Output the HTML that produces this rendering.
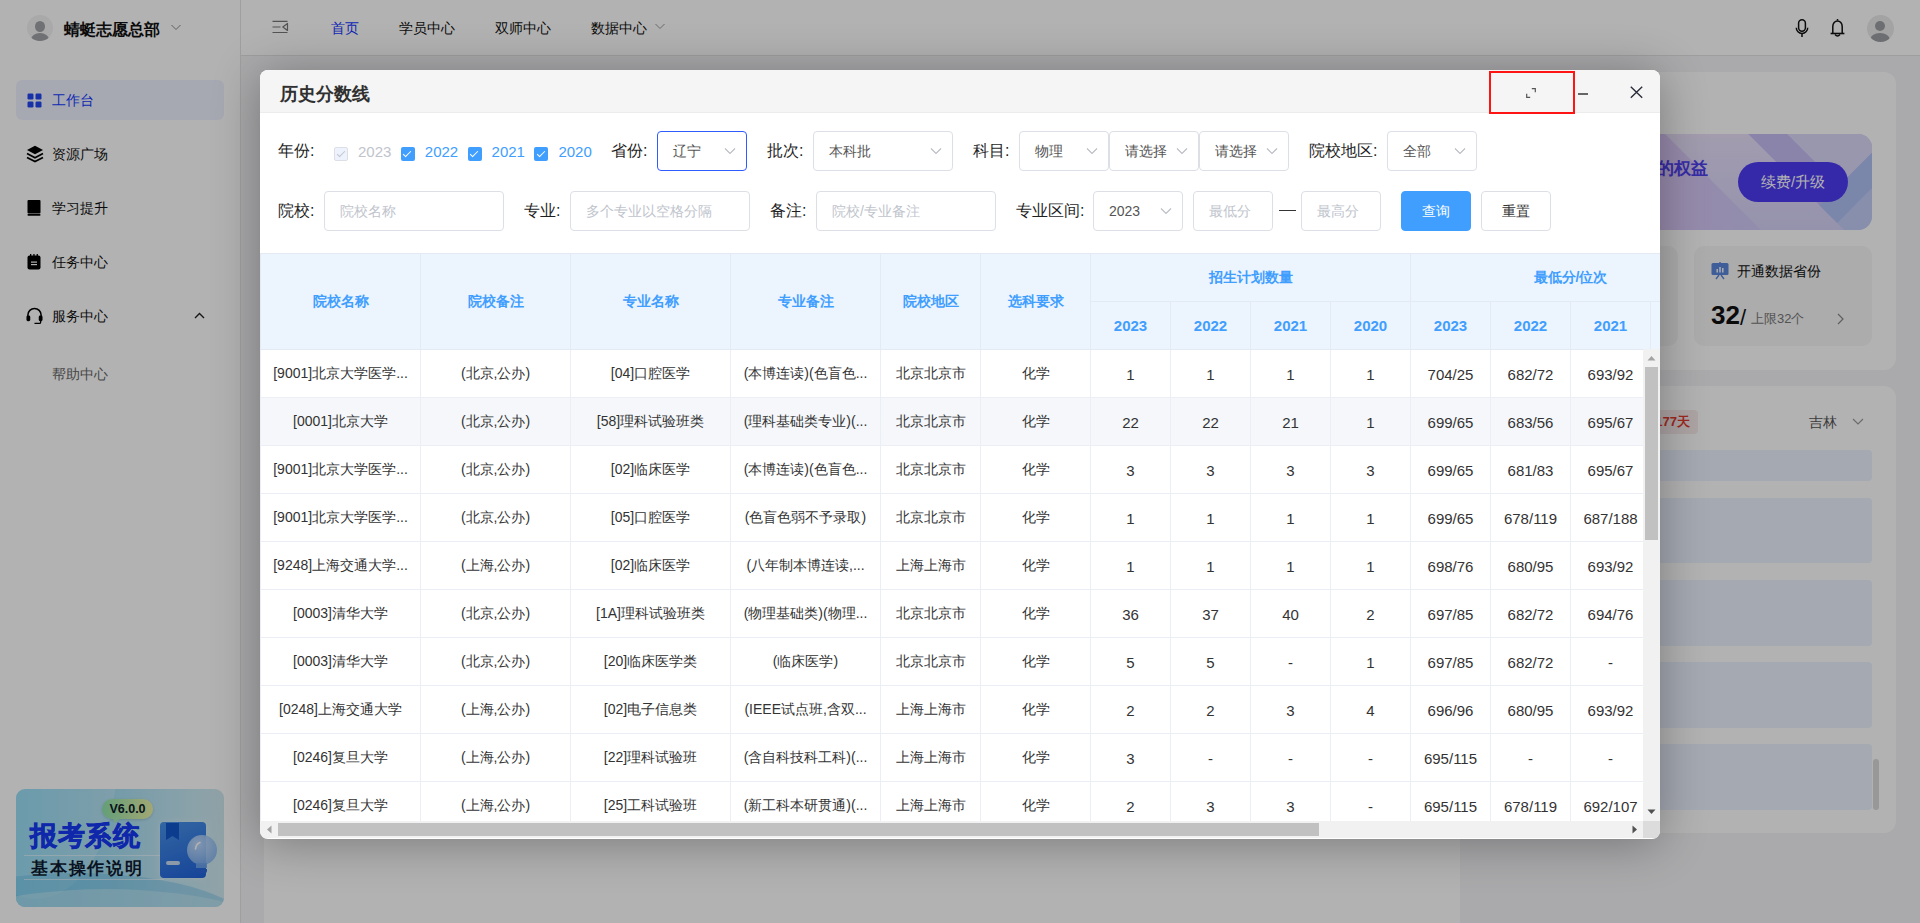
<!DOCTYPE html>
<html><head><meta charset="utf-8">
<style>
*{box-sizing:border-box;margin:0;padding:0}
html,body{width:1920px;height:923px;overflow:hidden;font-family:"Liberation Sans",sans-serif;background:#f4f4f6;position:relative}
.abs{position:absolute}
/* sidebar */
#side{position:absolute;left:0;top:0;width:241px;height:923px;background:#fff;border-right:1px solid #e4e4e4}
.mi{position:absolute;left:16px;width:208px;height:40px;font-size:14px;color:#111;line-height:40px;padding-left:36px}
.mi.act{background:#eef3ff;border-radius:6px;color:#1638ff}
.mi svg{position:absolute;left:10.5px;top:12.5px}
/* header */
#hdr{position:absolute;left:241px;top:0;width:1679px;height:56px;background:#fff;border-bottom:1px solid #e2e2e2}
.nav{position:absolute;top:0;height:56px;line-height:56px;font-size:14px;color:#111}
/* main cards */
.card{position:absolute;background:#fff;border-radius:8px}
/* overlay */
#ov{position:absolute;left:0;top:0;width:1920px;height:923px;background:rgba(0,0,0,.3)}
/* modal */
#modal{position:absolute;left:260px;top:70px;width:1400px;height:769px;background:#fff;border-radius:8px;overflow:hidden;box-shadow:0 4px 48px rgba(0,0,0,.32)}
#mh{position:absolute;left:0;top:0;width:1400px;height:43px;background:#f5f5f5;border-bottom:1px solid #ececec}
#mh .t{position:absolute;left:20px;top:12.5px;line-height:22px;font-size:18px;font-weight:bold;color:#303030}
.lbl{position:absolute;font-size:16px;color:#1f1f1f;line-height:20px;white-space:nowrap}
.sel{position:absolute;height:40px;border:1px solid #dcdfe6;border-radius:4px;background:#fff;font-size:14px;color:#555;line-height:38px;padding-left:15px;white-space:nowrap}
.sel.act{border-color:#2f5bff}
.st.ph{color:#c0c4cc}
.cb{position:absolute;width:14px;height:14px;border-radius:2px;background:#409eff}
.cb:after{content:"";box-sizing:content-box;position:absolute;left:4.5px;top:2.2px;width:3px;height:7px;border-right:1.6px solid #fff;border-bottom:1.6px solid #fff;transform:rotate(45deg)}
.cb.dis{background:#edf2fc;border:1px solid #dcdfe6}
.cb.dis:after{border-color:#c0c4cc;left:3.5px;top:1.2px;border-width:1px}
.yr{position:absolute;font-size:15px;color:#409eff;line-height:20px}
.yr.dis{color:#c0c4cc}
.btn{position:absolute;height:40px;border:1px solid #dcdfe6;border-radius:4px;background:#fff;font-size:14px;color:#333;line-height:38px;text-align:center}
.btn.pri{background:#409eff;border-color:#409eff;color:#fff}
/* table */
#tw{position:absolute;left:0;top:183px;width:1400px;height:568px;overflow:hidden}
table{border-collapse:collapse;table-layout:fixed;font-size:14px;color:#333;width:1200px}
th{background:#ecf4fe;color:#409eff;font-weight:bold;font-size:14px;border:1px solid #e4eaf4;text-align:center;height:48px;white-space:nowrap;overflow:hidden}
td.n,th.n{font-size:15px}
td{border:1px solid #ebeef5;text-align:center;height:48px;padding-top:1px;white-space:nowrap;overflow:hidden}
tr.hov td{background:#f5f7fa}
.sb{position:absolute;background:#f1f1f1}
</style></head><body>
<div id="side">
  <div class="abs" style="left:27px;top:15px;width:26px;height:26px;border-radius:50%;background:#f2f2f2;overflow:hidden">
    <div class="abs" style="left:8px;top:6px;width:10px;height:11px;border-radius:50%;background:#9fa2a6"></div>
    <div class="abs" style="left:4px;top:18px;width:18px;height:13px;border-radius:50%;background:#9fa2a6"></div>
  </div>
  <div class="abs" style="left:64px;top:19px;font-size:16px;font-weight:bold;color:#111;line-height:22px">蜻蜓志愿总部</div>
  <svg class="abs" style="left:170px;top:24px" width="12" height="8" viewBox="0 0 12 8"><path d="M1.5 1 L6 5.5 L10.5 1" fill="none" stroke="#888" stroke-width="1"/></svg>
  <div class="mi act" style="top:80px"><svg width="15" height="15" viewBox="0 0 15 15"><rect x="0.5" y="0.5" width="6" height="6" rx="1.3" fill="#2146f0"/><rect x="8.5" y="0.5" width="6" height="6" rx="1.3" fill="#2146f0"/><rect x="0.5" y="8.5" width="6" height="6" rx="1.3" fill="#2146f0"/><rect x="8.5" y="8.5" width="6" height="6" rx="1.3" fill="#2146f0"/></svg>工作台</div>
  <div class="mi" style="top:134px"><svg width="18" height="19" viewBox="0 0 18 19" style="left:9.5px;top:11px"><path d="M9 0.8 L17 5 L9 9.2 L1 5 Z" fill="#000"/><path d="M1 8.6 L9 12.8 L17 8.6" fill="none" stroke="#000" stroke-width="1.7"/><path d="M1 12.4 L9 16.6 L17 12.4" fill="none" stroke="#000" stroke-width="1.7"/></svg>资源广场</div>
  <div class="mi" style="top:188px"><svg width="14" height="16" viewBox="0 0 14 16" style="left:10.5px;top:12px"><rect x="0.5" y="0" width="13" height="13.5" rx="1" fill="#000"/><rect x="0.5" y="14" width="13" height="1.8" rx="0.8" fill="#000"/></svg>学习提升</div>
  <div class="mi" style="top:242px"><svg width="14" height="16" viewBox="0 0 14 16" style="left:10.5px;top:12px"><rect x="0.5" y="1.5" width="13" height="14" rx="2" fill="#000"/><rect x="3" y="0" width="1.3" height="3" fill="#000"/><rect x="6.3" y="0" width="1.3" height="3" fill="#000"/><rect x="9.6" y="0" width="1.3" height="3" fill="#000"/><rect x="4" y="7.5" width="6" height="1.2" fill="#fff"/><rect x="4" y="10" width="6" height="1.2" fill="#fff"/></svg>任务中心</div>
  <div class="mi" style="top:296px"><svg width="17" height="18" viewBox="0 0 18 18" style="left:9.5px;top:11px"><path d="M2 10 V8 A7 7 0 0 1 16 8 V10" fill="none" stroke="#000" stroke-width="1.6"/><rect x="0.5" y="8.5" width="4" height="6" rx="1.5" fill="#000"/><rect x="13.5" y="8.5" width="4" height="6" rx="1.5" fill="#000"/><path d="M15.5 14 V15.5 Q15.5 16.8 14 16.8 H9" fill="none" stroke="#000" stroke-width="1.4"/></svg>服务中心</div>
  <svg class="abs" style="left:194px;top:312px" width="11" height="7" viewBox="0 0 11 7"><path d="M1 6 L5.5 1.5 L10 6" fill="none" stroke="#222" stroke-width="1.4"/></svg>
  <div class="mi" style="top:354px;color:#666">帮助中心</div>
  <!-- banner -->
  <div class="abs" style="left:16px;top:789px;width:208px;height:118px;border-radius:9px;overflow:hidden;background:linear-gradient(90deg,#84d8f4 0%,#a0dcf2 40%,#bfe6f4 75%,#d0eaf0 100%)">
    <div class="abs" style="left:-60px;top:-150px;width:160px;height:260px;border-radius:50%;background:rgba(255,255,255,.18)"></div>
    <div class="abs" style="left:-120px;top:84px;width:360px;height:120px;border-radius:50%;background:rgba(90,180,225,.35)"></div>
    <div class="abs" style="left:-100px;top:100px;width:380px;height:120px;border-radius:50%;background:rgba(200,235,245,.5)"></div>
    <div class="abs" style="left:8px;top:66px;width:140px;height:1px;background:rgba(255,255,255,.5)"></div>
    <div class="abs" style="left:8px;top:90px;width:140px;height:1px;background:rgba(255,255,255,.5)"></div>
    <div class="abs" style="left:86px;top:10px;width:51px;height:20px;border-radius:10px;background:linear-gradient(90deg,#8ee3ac,#e8f0a6);box-shadow:0 1px 3px rgba(0,0,0,.15)"></div>
    <svg class="abs" style="left:96px;top:28px" width="10" height="6" viewBox="0 0 10 6"><path d="M0 0 H10 L3 6 Z" fill="#a6e8b2"/></svg>
    <div class="abs" style="left:86px;top:10px;width:51px;height:20px;font-size:12.5px;font-weight:bold;color:#0c1a2a;line-height:20px;text-align:center">V6.0.0</div>
    <div class="abs" style="left:14px;top:32px;font-size:27px;font-weight:900;color:#1638f4;line-height:30px;letter-spacing:0.5px;-webkit-text-stroke:0.6px #1638f4">报考系统</div>
    <div class="abs" style="left:15px;top:70px;font-size:16.5px;font-weight:bold;color:#0e1b30;line-height:18px;letter-spacing:1.8px">基本操作说明</div>
    <div class="abs" style="left:144px;top:33px;width:46px;height:56px;border-radius:4px;background:linear-gradient(160deg,#4a93ea,#1f62da);box-shadow:0 0 6px rgba(255,255,255,.4)"></div>
    <svg class="abs" style="left:150px;top:34px" width="14" height="18" viewBox="0 0 14 18"><path d="M0 0 H13 V17 L6.5 13 L0 17 Z" fill="#1256cc"/></svg>
    <div class="abs" style="left:150px;top:72px;width:14px;height:4px;border-radius:2px;background:#c9dcf3"></div>
    <div class="abs" style="left:171px;top:46px;width:30px;height:30px;border-radius:50%;background:radial-gradient(circle at 35% 30%,rgba(200,225,255,.9),rgba(110,165,235,.85))"></div>
    <div class="abs" style="left:180px;top:74px;width:11px;height:5px;background:rgba(110,165,235,.9)"></div>
    <div class="abs" style="left:180px;top:80px;width:11px;height:4px;border-radius:0 0 2px 2px;background:#2a66dc"></div>
    <svg class="abs" style="left:178px;top:52px" width="10" height="10" viewBox="0 0 10 10"><path d="M1.5 8 Q2 3 6 1.5" fill="none" stroke="#fff" stroke-width="1.6" stroke-linecap="round"/></svg>
  </div>
</div>
<div id="hdr">
  <svg class="abs" style="left:31px;top:20px" width="17" height="14" viewBox="0 0 17 14"><path d="M0.5 1.4 H15.5 M0.5 7 H8.5 M0.5 12.5 H15.5" stroke="#777" stroke-width="1.2"/><path d="M15.5 3.4 L10.8 7 L15.5 10.4 Z" fill="none" stroke="#777" stroke-width="1.2" stroke-linejoin="round"/></svg>
  <div class="nav" style="left:90px;color:#1638ff">首页</div>
  <div class="nav" style="left:158px">学员中心</div>
  <div class="nav" style="left:254px">双师中心</div>
  <div class="nav" style="left:350px">数据中心</div>
  <svg class="abs" style="left:413px;top:23px" width="12" height="8" viewBox="0 0 12 8"><path d="M1.5 1 L6 5.5 L10.5 1" fill="none" stroke="#999" stroke-width="1"/></svg>
  <svg class="abs" style="left:1554px;top:18px" width="14" height="20" viewBox="0 0 14 20"><rect x="3.6" y="1.8" width="6.8" height="11.4" rx="3.4" fill="none" stroke="#111" stroke-width="1.5"/><path d="M1.3 9.8 A5.7 5.7 0 0 0 12.7 9.8" fill="none" stroke="#111" stroke-width="1.5"/><path d="M7 15.6 V19" stroke="#111" stroke-width="1.5"/></svg>
  <svg class="abs" style="left:1589px;top:18px" width="15" height="20" viewBox="0 0 15 20"><path d="M7.5 1 V2.5" stroke="#111" stroke-width="1.5"/><path d="M2.8 15.5 V8.5 A4.7 5.5 0 0 1 12.2 8.5 V15.5" fill="none" stroke="#111" stroke-width="1.5"/><path d="M0.6 15.5 H14.4" stroke="#111" stroke-width="1.6"/><path d="M5 16.5 Q7.5 19.5 10 16.5" fill="none" stroke="#111" stroke-width="1.4"/></svg>
  <div class="abs" style="left:1625.5px;top:15px;width:27px;height:27px;border-radius:50%;background:#eaeaea;overflow:hidden">
    <div class="abs" style="left:8.5px;top:6px;width:10px;height:10px;border-radius:50%;background:#9c9ea2"></div>
    <div class="abs" style="left:3.5px;top:18px;width:20px;height:14px;border-radius:50%;background:#9c9ea2"></div>
  </div>
</div>
<!-- main content under overlay -->
<div class="card" style="left:264px;top:72px;width:1196px;height:900px"></div>
<div class="card" style="left:1460px;top:72px;width:436px;height:298px;border-radius:12px">
  <div class="abs" style="left:23px;top:62px;width:389px;height:96px;border-radius:14px;overflow:hidden">
    <svg class="abs" style="left:0;top:0" width="389" height="96" viewBox="0 0 389 96"><defs><linearGradient id="pg" x1="0" y1="0" x2="1" y2="0"><stop offset="0" stop-color="#d6c0f4"/><stop offset="0.45" stop-color="#dac6f6"/><stop offset="1" stop-color="#c6d0fa"/></linearGradient></defs>
    <rect width="389" height="96" fill="url(#pg)"/>
    <defs><linearGradient id="lb" x1="0" y1="0" x2="0" y2="1"><stop offset="0" stop-color="#e8e0fa"/><stop offset="1" stop-color="#d6d2f8"/></linearGradient></defs><polygon points="182,0 265.4,0 361.4,96 278,96" fill="url(#lb)"/>
    <polygon points="304,0 389,0 389,18.7 355.9,51.9" fill="#dcd8f8"/>
    <polygon points="265.4,0 304,0 373.6,69.6 354.3,88.9" fill="#c6bef4"/>
    <polygon points="336.5,71.2 407.7,0 443.2,0 354.3,88.9" fill="#afc0f4"/>
    <polygon points="361.4,96 354.3,88.9 443.2,0 443.2,96" fill="#c2cdf8"/>
    </svg>
    <div class="abs" style="left:140px;top:20px;font-size:17px;font-weight:bold;color:#4f3fec;line-height:30px;white-space:nowrap">导师的权益</div>
    <div class="abs" style="left:255px;top:28px;width:110px;height:40px;border-radius:20px;background:#4c3cf4;color:#fff;font-size:14.5px;line-height:40px;text-align:center">续费/升级</div>
  </div>
  <div class="abs" style="left:20px;top:174px;width:198px;height:100px;border-radius:10px;background:#f6f6f6"></div>
  <div class="abs" style="left:234px;top:174px;width:178px;height:100px;border-radius:10px;background:#f6f6f6">
    <svg class="abs" style="left:17px;top:16px" width="18" height="18" viewBox="0 0 18 18"><rect x="0.5" y="1" width="17" height="12" rx="1.5" fill="#5b86dc"/><path d="M9 0 V2 M5 17 L8 13 M13 17 L10 13" stroke="#5b86dc" stroke-width="1.4"/><rect x="5.5" y="7" width="1.4" height="3.5" fill="#fff"/><rect x="8.3" y="5" width="1.4" height="5.5" fill="#fff"/><rect x="11.1" y="6" width="1.4" height="4.5" fill="#fff"/></svg>
    <div class="abs" style="left:43px;top:15px;font-size:14px;color:#111;line-height:20px;white-space:nowrap">开通数据省份</div>
    <div class="abs" style="left:17px;top:54px;font-size:26px;font-weight:bold;color:#111;line-height:30px;white-space:nowrap">32<span style="font-size:22px;font-weight:normal;position:relative;top:1px">/</span></div>
    <div class="abs" style="left:57px;top:64px;font-size:13px;color:#777;line-height:18px;white-space:nowrap">上限32个</div>
    <svg class="abs" style="left:143px;top:67px" width="7" height="12" viewBox="0 0 7 12"><path d="M1 1 L6 6 L1 11" fill="none" stroke="#888" stroke-width="1.2"/></svg>
  </div>
</div>
<div class="card" style="left:1460px;top:386px;width:436px;height:447px;border-radius:12px">
  <div class="abs" style="left:150px;top:24px;width:88px;height:24px;border-radius:4px;background:#f8ebeb;color:#e23a30;font-size:13px;font-weight:bold;line-height:24px;text-align:right;padding-right:8px">177天</div>
  <div class="abs" style="left:349px;top:26px;font-size:14px;color:#555;line-height:20px">吉林</div>
  <svg class="abs" style="left:392px;top:32px" width="12" height="8" viewBox="0 0 12 8"><path d="M1 1 L6 6 L11 1" fill="none" stroke="#999" stroke-width="1.1"/></svg>
  <div class="abs" style="left:23px;top:64px;width:389px;height:31px;border-radius:4px;background:#ecf3ff"></div>
  <div class="abs" style="left:23px;top:112px;width:389px;height:65px;border-radius:4px;background:#ecf3ff"></div>
  <div class="abs" style="left:23px;top:194px;width:389px;height:66px;border-radius:4px;background:#ecf3ff"></div>
  <div class="abs" style="left:23px;top:276px;width:389px;height:66px;border-radius:4px;background:#ecf3ff"></div>
  <div class="abs" style="left:23px;top:358px;width:389px;height:66px;border-radius:4px;background:#ecf3ff"></div>
  <div class="abs" style="left:413px;top:373px;width:6px;height:51px;border-radius:3px;background:#dadada"></div>
</div>
<div id="ov"></div>
<div id="modal">
  <div id="mh"><div class="t">历史分数线</div>
    <div class="abs" style="left:1229px;top:1px;width:86px;height:43px;border:2px solid #ff1414"></div>
    <svg class="abs" style="left:1266px;top:18px" width="10" height="10" viewBox="0 0 10 10"><path d="M5.8 0.7 H9.3 V4.2 M4.2 9.3 H0.7 V5.8" fill="none" stroke="#555" stroke-width="1.2"/></svg>
    <div class="abs" style="left:1318px;top:23.2px;width:10px;height:1.5px;background:#666"></div>
    <svg class="abs" style="left:1369.5px;top:16px" width="13" height="12.5" viewBox="0 0 13 12.5"><path d="M0.8 0.8 L12.2 11.7 M12.2 0.8 L0.8 11.7" stroke="#2a2d3a" stroke-width="1.4"/></svg>
  </div>
<div class="lbl" style="left:18px;top:71px">年份:</div>
<div class="cb dis" style="left:74.0px;top:77px"></div>
<div class="yr dis" style="left:98.0px;top:72px">2023</div>
<div class="cb" style="left:140.8px;top:77px"></div>
<div class="yr" style="left:164.8px;top:72px">2022</div>
<div class="cb" style="left:207.6px;top:77px"></div>
<div class="yr" style="left:231.6px;top:72px">2021</div>
<div class="cb" style="left:274.4px;top:77px"></div>
<div class="yr" style="left:298.4px;top:72px">2020</div>
<div class="lbl" style="left:351px;top:71px">省份:</div>
<div class="sel act" style="left:397px;top:61px;width:90px"><span class="st">辽宁</span><svg class="abs" style="left:66px;top:15px" width="12" height="8" viewBox="0 0 12 8"><path d="M1 1.5 L6 6.5 L11 1.5" fill="none" stroke="#b9bcc3" stroke-width="1.1"/></svg></div>
<div class="lbl" style="left:507px;top:71px">批次:</div>
<div class="sel" style="left:553px;top:61px;width:140px"><span class="st">本科批</span><svg class="abs" style="left:116px;top:15px" width="12" height="8" viewBox="0 0 12 8"><path d="M1 1.5 L6 6.5 L11 1.5" fill="none" stroke="#b9bcc3" stroke-width="1.1"/></svg></div>
<div class="lbl" style="left:713px;top:71px">科目:</div>
<div class="sel" style="left:759px;top:61px;width:90px"><span class="st">物理</span><svg class="abs" style="left:66px;top:15px" width="12" height="8" viewBox="0 0 12 8"><path d="M1 1.5 L6 6.5 L11 1.5" fill="none" stroke="#b9bcc3" stroke-width="1.1"/></svg></div>
<div class="sel" style="left:849px;top:61px;width:90px"><span class="st">请选择</span><svg class="abs" style="left:66px;top:15px" width="12" height="8" viewBox="0 0 12 8"><path d="M1 1.5 L6 6.5 L11 1.5" fill="none" stroke="#b9bcc3" stroke-width="1.1"/></svg></div>
<div class="sel" style="left:939px;top:61px;width:90px"><span class="st">请选择</span><svg class="abs" style="left:66px;top:15px" width="12" height="8" viewBox="0 0 12 8"><path d="M1 1.5 L6 6.5 L11 1.5" fill="none" stroke="#b9bcc3" stroke-width="1.1"/></svg></div>
<div class="lbl" style="left:1049px;top:71px">院校地区:</div>
<div class="sel" style="left:1127px;top:61px;width:90px"><span class="st">全部</span><svg class="abs" style="left:66px;top:15px" width="12" height="8" viewBox="0 0 12 8"><path d="M1 1.5 L6 6.5 L11 1.5" fill="none" stroke="#b9bcc3" stroke-width="1.1"/></svg></div>
<div class="lbl" style="left:18px;top:131px">院校:</div>
<div class="sel" style="left:64px;top:121px;width:180px"><span class="st ph">院校名称</span></div>
<div class="lbl" style="left:264px;top:131px">专业:</div>
<div class="sel" style="left:310px;top:121px;width:180px"><span class="st ph">多个专业以空格分隔</span></div>
<div class="lbl" style="left:510px;top:131px">备注:</div>
<div class="sel" style="left:556px;top:121px;width:180px"><span class="st ph">院校/专业备注</span></div>
<div class="lbl" style="left:756px;top:131px">专业区间:</div>
<div class="sel" style="left:833px;top:121px;width:90px"><span class="st">2023</span><svg class="abs" style="left:66px;top:15px" width="12" height="8" viewBox="0 0 12 8"><path d="M1 1.5 L6 6.5 L11 1.5" fill="none" stroke="#b9bcc3" stroke-width="1.1"/></svg></div>
<div class="sel" style="left:933px;top:121px;width:80px"><span class="st ph">最低分</span></div>
<div class="abs" style="left:1019px;top:140px;width:17px;height:1px;background:#333"></div>
<div class="sel" style="left:1041px;top:121px;width:80px"><span class="st ph">最高分</span></div>
<div class="btn pri" style="left:1141px;top:121px;width:70px">查询</div>
<div class="btn" style="left:1221px;top:121px;width:70px">重置</div>
  <div id="tw">
<table><colgroup><col style="width:160px"><col style="width:150px"><col style="width:160px"><col style="width:150px"><col style="width:100px"><col style="width:110px"><col style="width:80px"><col style="width:80px"><col style="width:80px"><col style="width:80px"><col style="width:80px"><col style="width:80px"><col style="width:80px"><col style="width:80px"></colgroup><tr class="h1"><th rowspan="2">院校名称</th><th rowspan="2">院校备注</th><th rowspan="2">专业名称</th><th rowspan="2">专业备注</th><th rowspan="2">院校地区</th><th rowspan="2">选科要求</th><th colspan="4">招生计划数量</th><th colspan="4" class="mf">最低分/位次</th></tr><tr class="h2"><th class="n">2023</th><th class="n">2022</th><th class="n">2021</th><th class="n">2020</th><th class="n">2023</th><th class="n">2022</th><th class="n">2021</th><th class="n">2020</th></tr><tr><td>[9001]北京大学医学...</td><td>(北京,公办)</td><td>[04]口腔医学</td><td>(本博连读)(色盲色...</td><td>北京北京市</td><td>化学</td><td class="n">1</td><td class="n">1</td><td class="n">1</td><td class="n">1</td><td class="n">704/25</td><td class="n">682/72</td><td class="n">693/92</td><td>-</td></tr><tr class="hov"><td>[0001]北京大学</td><td>(北京,公办)</td><td>[58]理科试验班类</td><td>(理科基础类专业)(...</td><td>北京北京市</td><td>化学</td><td class="n">22</td><td class="n">22</td><td class="n">21</td><td class="n">1</td><td class="n">699/65</td><td class="n">683/56</td><td class="n">695/67</td><td>-</td></tr><tr><td>[9001]北京大学医学...</td><td>(北京,公办)</td><td>[02]临床医学</td><td>(本博连读)(色盲色...</td><td>北京北京市</td><td>化学</td><td class="n">3</td><td class="n">3</td><td class="n">3</td><td class="n">3</td><td class="n">699/65</td><td class="n">681/83</td><td class="n">695/67</td><td>-</td></tr><tr><td>[9001]北京大学医学...</td><td>(北京,公办)</td><td>[05]口腔医学</td><td>(色盲色弱不予录取)</td><td>北京北京市</td><td>化学</td><td class="n">1</td><td class="n">1</td><td class="n">1</td><td class="n">1</td><td class="n">699/65</td><td class="n">678/119</td><td class="n">687/188</td><td>-</td></tr><tr><td>[9248]上海交通大学...</td><td>(上海,公办)</td><td>[02]临床医学</td><td>(八年制本博连读,...</td><td>上海上海市</td><td>化学</td><td class="n">1</td><td class="n">1</td><td class="n">1</td><td class="n">1</td><td class="n">698/76</td><td class="n">680/95</td><td class="n">693/92</td><td>-</td></tr><tr><td>[0003]清华大学</td><td>(北京,公办)</td><td>[1A]理科试验班类</td><td>(物理基础类)(物理...</td><td>北京北京市</td><td>化学</td><td class="n">36</td><td class="n">37</td><td class="n">40</td><td class="n">2</td><td class="n">697/85</td><td class="n">682/72</td><td class="n">694/76</td><td>-</td></tr><tr><td>[0003]清华大学</td><td>(北京,公办)</td><td>[20]临床医学类</td><td>(临床医学)</td><td>北京北京市</td><td>化学</td><td class="n">5</td><td class="n">5</td><td class="n">-</td><td class="n">1</td><td class="n">697/85</td><td class="n">682/72</td><td class="n">-</td><td>-</td></tr><tr><td>[0248]上海交通大学</td><td>(上海,公办)</td><td>[02]电子信息类</td><td>(IEEE试点班,含双...</td><td>上海上海市</td><td>化学</td><td class="n">2</td><td class="n">2</td><td class="n">3</td><td class="n">4</td><td class="n">696/96</td><td class="n">680/95</td><td class="n">693/92</td><td>-</td></tr><tr><td>[0246]复旦大学</td><td>(上海,公办)</td><td>[22]理科试验班</td><td>(含自科技科工科)(...</td><td>上海上海市</td><td>化学</td><td class="n">3</td><td class="n">-</td><td class="n">-</td><td class="n">-</td><td class="n">695/115</td><td class="n">-</td><td class="n">-</td><td>-</td></tr><tr><td>[0246]复旦大学</td><td>(上海,公办)</td><td>[25]工科试验班</td><td>(新工科本研贯通)(...</td><td>上海上海市</td><td>化学</td><td class="n">2</td><td class="n">3</td><td class="n">3</td><td class="n">-</td><td class="n">695/115</td><td class="n">678/119</td><td class="n">692/107</td><td>-</td></tr></table>
  </div>
  <!-- vertical scrollbar -->
  <div class="sb" style="left:1383px;top:279px;width:17px;height:472px;background:#f1f1f1"></div>
  <svg class="abs" style="left:1387px;top:285px" width="9" height="6" viewBox="0 0 9 6"><path d="M0.5 5.5 L4.5 1 L8.5 5.5 Z" fill="#a3a3a3"/></svg>
  <div class="abs" style="left:1385px;top:297px;width:13px;height:173px;background:#c1c1c1"></div>
  <svg class="abs" style="left:1387px;top:739px" width="9" height="6" viewBox="0 0 9 6"><path d="M0.5 0.5 L4.5 5 L8.5 0.5 Z" fill="#505050"/></svg>
  <!-- horizontal scrollbar -->
  <div class="sb" style="left:0;top:751px;width:1383px;height:17px"></div>
  <svg class="abs" style="left:6px;top:755px" width="6" height="9" viewBox="0 0 6 9"><path d="M5.5 0.5 L1 4.5 L5.5 8.5 Z" fill="#a3a3a3"/></svg>
  <div class="abs" style="left:18px;top:753px;width:1041px;height:13px;background:#c1c1c1"></div>
  <svg class="abs" style="left:1372px;top:755px" width="6" height="9" viewBox="0 0 6 9"><path d="M0.5 0.5 L5 4.5 L0.5 8.5 Z" fill="#505050"/></svg>
  <div class="abs" style="left:1383px;top:751px;width:17px;height:17px;background:#dcdcdc"></div>
</div>
</body></html>
